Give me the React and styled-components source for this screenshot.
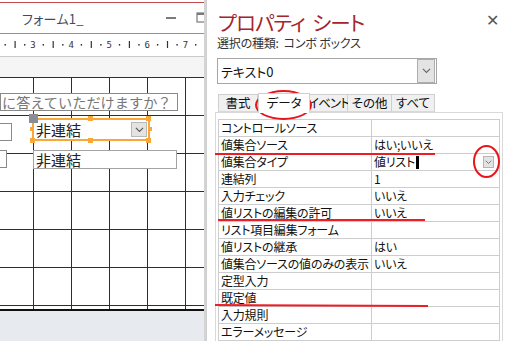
import React from "react";
import styled, { createGlobalStyle } from "styled-components";

const Global = createGlobalStyle`
  html, body { margin: 0; padding: 0; background: #fff; }
  body {
    font-family: "Noto Sans CJK JP", "Noto Sans", sans-serif;
    font-feature-settings: "palt";
    overflow: hidden;
  }
  * { box-sizing: border-box; }
`;

const Root = styled.div`
  position: relative;
  width: 513px;
  height: 341px;
  display: flex;
  overflow: hidden;
  background: #fff;
`;

/* ---------- left pane (form designer) ---------- */
const LeftPane = styled.div`
  width: 206px;
  flex: none;
  display: flex;
  flex-direction: column;
  border-right: 2px solid #d4d4d4;
  background: #e7eaef;
`;

const TitleBar = styled.div`
  height: 34px;
  flex: none;
  display: flex;
  align-items: center;
  padding: 0 0 0 22px;
  background: #fff;
  border-top: 2px solid #fff;
  box-shadow: inset 0 1px 0 #c4494b;
  border-bottom: 1px solid #8d9198;
`;

const FormTitle = styled.span`
  font-size: 13px;
  color: #3f4a63;
  letter-spacing: 0.3px;
  flex: 1;
  margin-top: 1px;
`;

const WinButtons = styled.div`
  display: flex;
  align-items: center;
  gap: 20px;
  height: 100%;
`;

const RulerBar = styled.div`
  height: 23px;
  flex: none;
  background: #fff;
  border-bottom: 1px solid #c9c9c9;
`;

const HeaderBand = styled.div`
  height: 20px;
  flex: none;
  background: #f5f5f5;
`;

const Section = styled.div`
  position: relative;
  height: 234px;
  flex: none;
  background-color: #fff;
  background-image:
    repeating-linear-gradient(to right, transparent 0 37px, #2e2e2e 37px 38px),
    repeating-linear-gradient(to bottom, #2e2e2e 0 1px, transparent 1px 38px);
  background-position: -4px 0, 0 0;
  border-bottom: 2px solid #111;
  font-feature-settings: normal;
`;

const CanvasBox = styled.div`
  position: absolute;
  left: ${(p) => p.$x}px;
  top: ${(p) => p.$y}px;
  width: ${(p) => p.$w}px;
  height: ${(p) => p.$h}px;
  background: #fff;
  border: ${(p) => (p.$light ? "1.5px solid #a3a3a3" : "1px solid #8a8a8a")};
  display: flex;
  align-items: center;
  overflow: hidden;
  white-space: nowrap;
  font-size: ${(p) => p.$fs || 15}px;
  color: ${(p) => p.$color || "#222"};
  padding-left: ${(p) => p.$pad || 2}px;
  line-height: 15px;
`;

const ComboCtl = styled.div`
  position: absolute;
  left: 32px;
  top: 41px;
  width: 118px;
  height: 23px;
  border: 2.5px solid #f8a73a;
  background: #fff;
  display: flex;
  align-items: center;
  padding-left: 2px;
  font-size: 15px;
  color: #222;
  line-height: 15px;
`;

const ComboText = styled.span`
  flex: 1;
`;

const DropBtn = styled.div`
  width: ${(p) => p.$w}px;
  height: ${(p) => p.$h}px;
  flex: none;
  background: #e3e3e3;
  border: 1px solid ${(p) => p.$b || "#b9b9b9"};
  display: flex;
  align-items: center;
  justify-content: center;
  margin-right: ${(p) => p.$mr || 0}px;
`;

const Handle = styled.div`
  position: absolute;
  left: ${(p) => p.$x}px;
  top: ${(p) => p.$y}px;
  width: ${(p) => p.$s}px;
  height: ${(p) => p.$s}px;
  background: ${(p) => p.$c};
`;

const BottomArea = styled.div`
  flex: 1;
  background: #e7eaef;
`;

/* ---------- right pane (property sheet) ---------- */
const RightPane = styled.div`
  flex: 1;
  display: flex;
  flex-direction: column;
  border-left: 1px solid #cfcfcf;
  padding: 11px 10px 0 8px;
  background: #fff;
  min-width: 0;
`;

const HeadRow = styled.div`
  display: flex;
  align-items: center;
  justify-content: space-between;
  height: 28px;
`;

const SheetTitle = styled.div`
  font-size: 20.5px;
  color: #a4262c;
  letter-spacing: -0.9px;
  padding-left: 3px;
  line-height: 22px;
  margin-top: -2px;
  white-space: nowrap;
`;

const CloseX = styled.div`
  color: #555;
  font-size: 16px;
  margin-right: 4px;
  margin-top: -8px;
  line-height: 1;
`;

const SubTitle = styled.div`
  font-size: 12px;
  color: #333;
  padding-left: 2px;
  height: 17px;
  line-height: 17px;
  letter-spacing: -0.2px;
  white-space: nowrap;
`;

const SelectBox = styled.div`
  margin-top: 7px;
  margin-left: 2px;
  width: 220px;
  height: 28px;
  border: 1px solid #a6a6a6;
  display: flex;
  align-items: center;
  padding-left: 3px;
  font-size: 13px;
  color: #111;
`;

const SelectText = styled.span`
  flex: 1;
`;

const TabRow = styled.div`
  display: flex;
  margin-top: 9px;
  padding-left: 3px;
  height: 19px;
  align-items: flex-end;
`;

const Tab = styled.div`
  height: ${(p) => (p.$active ? 20 : 18)}px;
  width: ${(p) => p.$w}px;
  border: 1px solid #cfcfcf;
  border-bottom: ${(p) => (p.$active ? "none" : "1px solid #d9d9d9")};
  border-left: ${(p) => (p.$first || p.$active ? "1px solid #cfcfcf" : "none")};
  background: ${(p) => (p.$active ? "#fff" : "#f0f0f0")};
  font-size: 12.5px;
  letter-spacing: ${(p) => p.$ls || 0}px;
  color: #111;
  display: flex;
  align-items: center;
  justify-content: center;
  line-height: 1;
  white-space: nowrap;
  position: relative;
  z-index: ${(p) => (p.$active ? 1 : 0)};
  margin-bottom: ${(p) => (p.$active ? -1 : 0)}px;
`;

const Panel = styled.div`
  flex: 1;
  border: 1px solid #d9d9d9;
  border-bottom: none;
  padding: 6px 2px 0 2px;
`;

const Grid = styled.div`
  display: grid;
  grid-template-columns: 153px 1fr;
  border-top: 1px solid #cdcdcd;
  border-left: 1px solid #cdcdcd;
`;

const Cell = styled.div`
  height: 17px;
  border-right: 1px solid #cdcdcd;
  border-bottom: 1px solid #cdcdcd;
  font-size: 12px;
  letter-spacing: -0.2px;
  color: #111;
  padding-left: 2px;
  display: flex;
  align-items: center;
  white-space: nowrap;
  overflow: hidden;
  line-height: 1;
`;

const ValText = styled.span`
  flex: 1;
  display: flex;
  align-items: center;
`;

const Caret = styled.span`
  display: inline-block;
  width: 3px;
  height: 13px;
  background: #000;
  margin-left: 1px;
`;

/* ---------- annotations ---------- */
const Ellipse = styled.div`
  position: absolute;
  left: ${(p) => p.$x}px;
  top: ${(p) => p.$y}px;
  width: ${(p) => p.$w}px;
  height: ${(p) => p.$h}px;
  border: 2px solid #e8141b;
  border-radius: 50%;
  pointer-events: none;
`;

const RedLine = styled.div`
  position: absolute;
  left: ${(p) => p.$x}px;
  top: ${(p) => p.$y}px;
  width: ${(p) => p.$w}px;
  height: 2px;
  background: #ee1c24;
  transform: rotate(${(p) => p.$r || 0}deg);
  transform-origin: left center;
  pointer-events: none;
`;

const Chevron = ({ size = 9, color = "#666" }) => (
  <svg width={size} height={size * 0.6} viewBox="0 0 10 6">
    <path d="M1 1 L5 5 L9 1" fill="none" stroke={color} strokeWidth="1.2" />
  </svg>
);

const Ruler = () => {
  const items = [];
  for (let k = 0; k < 6; k++) {
    const base = 33 + 38.1 * k;
    items.push(<rect key={"d1" + k} x={base - 28.5} y={44} width={1.4} height={1.6} fill="#333" />);
    items.push(<rect key={"t" + k} x={base - 18.5} y={41} width={1.2} height={7} fill="#333" />);
    items.push(<rect key={"d2" + k} x={base - 9} y={44} width={1.4} height={1.6} fill="#333" />);
  }
  const nums = [3, 4, 5, 6, 7];
  return (
    <svg width="204" height="23" viewBox="0 34 204 23" style={{ display: "block" }}>
      {items}
      {nums.map((n, i) => (
        <text
          key={n}
          x={33 + 38.1 * i}
          y={48}
          fontSize="9"
          fontFamily="DejaVu Sans Mono, monospace"
          textAnchor="middle"
          fill="#333"
        >
          {n}
        </text>
      ))}
    </svg>
  );
};

const rows = [
  ["コントロールソース", ""],
  ["値集合ソース", "はい;いいえ"],
  ["値集合タイプ", "値リスト", "caret"],
  ["連結列", "1"],
  ["入力チェック", "いいえ"],
  ["値リストの編集の許可", "いいえ"],
  ["リスト項目編集フォーム", ""],
  ["値リストの継承", "はい"],
  ["値集合ソースの値のみの表示", "いいえ"],
  ["定型入力", ""],
  ["既定値", ""],
  ["入力規則", ""],
  ["エラーメッセージ", ""],
];

const tabs = [
  ["書式", 40, 0],
  ["データ", 52, 0],
  ["イベント", 38, -0.8],
  ["その他", 44, 0],
  ["すべて", 43, 0],
];

export default function App() {
  return (
    <>
      <Global />
      <Root>
        <LeftPane>
          <TitleBar>
            <FormTitle>フォーム1_</FormTitle>
            <WinButtons>
              <svg width="10" height="4" viewBox="0 0 10 4">
                <rect x="0" y="1" width="10" height="2" fill="#7a7a7a" />
              </svg>
              <svg width="8" height="12" viewBox="0 0 8 12">
                <rect x="1" y="1" width="8" height="9" fill="none" stroke="#7a7a7a" strokeWidth="1.2" />
                <rect x="1" y="1" width="8" height="2" fill="#7a7a7a" />
              </svg>
            </WinButtons>
          </TitleBar>
          <RulerBar>
            <Ruler />
          </RulerBar>
          <HeaderBand />
          <Section>
            <CanvasBox $x={0} $y={16} $w={178} $h={18} $fs={14.2} $color="#777" $pad={1}>
              に答えていただけますか？
            </CanvasBox>
            <CanvasBox $x={-5} $y={46} $w={17} $h={18} />
            <ComboCtl>
              <ComboText>非連結</ComboText>
              <DropBtn $w={16} $h={15} $mr={1}>
                <Chevron size={9} color="#555" />
              </DropBtn>
            </ComboCtl>
            <Handle $x={29} $y={37} $s={9} $c="#8a8d94" />
            <Handle $x={88} $y={39} $s={5} $c="#f8a73a" />
            <Handle $x={146} $y={39} $s={5} $c="#f8a73a" />
            <Handle $x={148} $y={50} $s={4} $c="#f8a73a" />
            <Handle $x={146} $y={61} $s={5} $c="#f8a73a" />
            <Handle $x={88} $y={61} $s={5} $c="#f8a73a" />
            <Handle $x={30} $y={61} $s={5} $c="#f8a73a" />
            <Handle $x={30} $y={50} $s={4} $c="#f8a73a" />
            <CanvasBox $x={33} $y={73} $w={144} $h={19} $light>
              非連結
            </CanvasBox>
            <CanvasBox $x={-5} $y={73} $w={12} $h={18} />
          </Section>
          <BottomArea />
        </LeftPane>

        <RightPane>
          <HeadRow>
            <SheetTitle>プロパティ&nbsp; シート</SheetTitle>
            <CloseX>✕</CloseX>
          </HeadRow>
          <SubTitle>選択の種類:&nbsp; コンボ ボックス</SubTitle>
          <SelectBox>
            <SelectText>テキスト0</SelectText>
            <DropBtn $w={18} $h={24} $mr={1} $b="#adadad">
              <Chevron size={9} color="#666" />
            </DropBtn>
          </SelectBox>
          <TabRow>
            {tabs.map(([t, w, ls], i) => (
              <Tab key={t} $w={w} $ls={ls} $active={i === 1} $first={i === 0}>
                {t}
              </Tab>
            ))}
          </TabRow>
          <Panel>
            <Grid>
              {rows.map(([label, val, extra]) => (
                <React.Fragment key={label}>
                  <Cell>{label}</Cell>
                  <Cell>
                    <ValText>
                      {val}
                      {extra === "caret" && <Caret />}
                    </ValText>
                    {extra === "caret" && (
                      <DropBtn $w={11} $h={12} $mr={5} $b="#b5b5b5">
                        <Chevron size={7} color="#666" />
                      </DropBtn>
                    )}
                  </Cell>
                </React.Fragment>
              ))}
            </Grid>
          </Panel>
        </RightPane>

        <Ellipse $x={255} $y={90} $w={57} $h={30} />
        <Ellipse $x={473} $y={145} $w={27} $h={33} />
        <RedLine $x={215} $y={153} $w={220} />
        <RedLine $x={218} $y={219} $w={207} />
        <RedLine $x={215} $y={304} $w={213} $r={0.3} />
      </Root>
    </>
  );
}
